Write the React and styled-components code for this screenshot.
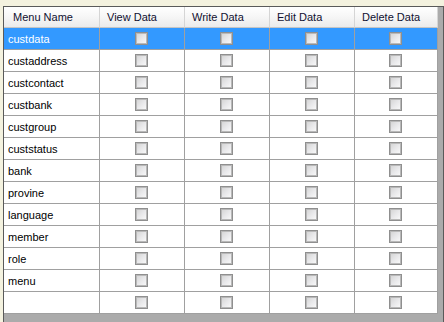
import React from 'react';
import styled, { createGlobalStyle } from 'styled-components';

const GlobalStyle = createGlobalStyle`
	html, body {
		margin: 0;
		padding: 0;
		background: #f4f2df;
		font-family: 'Liberation Sans', Arial, sans-serif;
		font-size: 11px;
		overflow: hidden;
	}
`;

const Frame = styled.div`
	padding: 6px 0 0 3px;
	height: 322px;
	box-sizing: border-box;
`;

const GridView = styled.div`
	width: 441px;
	height: 320px;
	box-sizing: border-box;
	background: #ababab;
	border: 1px solid #5a5a5a;
	border-bottom: none;
`;

const Table = styled.div`
	display: grid;
	grid-template-columns: 96px 85px 85px 85px 83px;
	width: 434px;
`;

const HeaderCell = styled.div`
	height: 21px;
	box-sizing: border-box;
	display: flex;
	align-items: center;
	padding-left: ${({ first }) => (first ? '9px' : '7px')};
	background: linear-gradient(#ffffff 0%, #f7f7f7 45%, #ebebeb 100%);
	border-right: 1px solid #d5d5d5;
	border-bottom: 1px solid #c5c5c5;
	color: #101030;
	white-space: nowrap;
`;

const Cell = styled.div`
	height: 22px;
	box-sizing: border-box;
	display: flex;
	align-items: center;
	justify-content: ${({ center }) => (center ? 'center' : 'flex-start')};
	padding-left: ${({ center }) => (center ? '0' : '4px')};
	background: ${({ selected }) => (selected ? '#3399ff' : '#ffffff')};
	color: ${({ selected }) => (selected ? '#ffffff' : '#000000')};
	border-right: 1px solid #a0a0a0;
	border-bottom: 1px solid #a0a0a0;
	white-space: nowrap;
`;

const CheckBox = styled.span`
	display: block;
	width: 13px;
	height: 13px;
	box-sizing: border-box;
	margin-left: -1px;
	border: 1px solid #8f8f8f;
	box-shadow: inset 0 0 0 1px #b9b9b9;
	background: linear-gradient(135deg, #d2d2d2 0%, #e8e8ea 50%, #fbfbfb 100%);
`;

const columns = ['Menu Name', 'View Data', 'Write Data', 'Edit Data', 'Delete Data'];

const menus = [
	'custdata',
	'custaddress',
	'custcontact',
	'custbank',
	'custgroup',
	'custstatus',
	'bank',
	'provine',
	'language',
	'member',
	'role',
	'menu',
	''
];

const App = () => (
	<>
		<GlobalStyle />
		<Frame>
			<GridView>
				<Table>
					{columns.map((col, i) => (
						<HeaderCell key={col} first={i === 0}>{col}</HeaderCell>
					))}
					{menus.map((name, r) => (
						<React.Fragment key={r}>
							<Cell selected={r === 0}>{name}</Cell>
							{[0, 1, 2, 3].map(c => (
								<Cell key={c} center selected={r === 0}>
									<CheckBox />
								</Cell>
							))}
						</React.Fragment>
					))}
				</Table>
			</GridView>
		</Frame>
	</>
);

export default App;
